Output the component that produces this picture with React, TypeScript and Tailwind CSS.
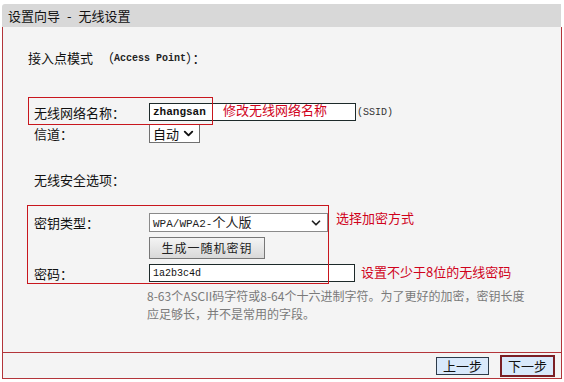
import { ChevronDown } from 'lucide-react';

const cjk = 'font-["Noto_Sans_CJK_SC","Noto_Sans",sans-serif]';
const mono = 'font-["Liberation_Mono","DejaVu_Sans_Mono","Noto_Sans_CJK_SC",monospace]';

function Label({ children }: { children: React.ReactNode }) {
  return <div className="w-[115px] shrink-0 text-[13px] leading-none text-[#111]">{children}</div>;
}

export default function App() {
  return (
    <div className={`h-[382px] w-[564px] bg-white px-[2px] pt-[4px] ${cjk}`}>
      <div className="flex h-[23px] w-[559px] items-center rounded-tl-[3px] bg-[#d8d8d8] pl-[6px] text-[13px] text-[#111]">
        设置向导<span className="mx-[7px]">-</span>无线设置
      </div>

      <div className="relative flex h-[352px] w-[560px] flex-col border-x border-b border-[#b3353a] bg-[#f4f4f4]">
        <div className="flex-1 pl-[31px]">
          <div className="-ml-[6px] mt-[23px] flex h-[16px] items-center text-[13px] text-[#111]">
            接入点模式
            <span className="ml-[8px]">（</span>
            <span className={`text-[10px] font-semibold text-[#222] ${mono}`}>Access Point</span>
            <span>）：</span>
          </div>

          <div className="mt-[37px] flex h-[18px] items-center">
            <Label>无线网络名称：</Label>
            <div className="flex h-[18px] w-[207px] items-center border border-[#1d2a2a] bg-white pl-[3px]">
              <span className={`text-[11px] font-bold text-[#111] ${mono}`}>zhangsan</span>
            </div>
            <span className={`ml-[1px] text-[10px] text-[#333] ${mono}`}>(SSID)</span>
          </div>

          <div className="mt-[3px] flex h-[19px] items-center">
            <Label>信道：</Label>
            <div className="flex h-[19px] w-[51px] items-center justify-between border border-[#707070] bg-white px-[3px] text-[13px] text-[#111]">
              自动
              <ChevronDown className="h-[15px] w-[15px]" strokeWidth={3} />
            </div>
          </div>

          <div className="mt-[29px] flex h-[16px] items-center text-[13px] text-[#111]">无线安全选项：</div>

          <div className="mt-[25px] flex h-[19px] items-center">
            <Label>密钥类型：</Label>
            <div className="flex h-[19px] w-[179px] items-center justify-between border border-[#8a8a8a] bg-white pl-[3px] pr-[4px]">
              <span className="text-[13px] text-[#222]">
                <span className={`text-[11px] ${mono}`}>WPA/WPA2-</span>个人版
              </span>
              <ChevronDown className="h-[14px] w-[14px] text-[#222]" strokeWidth={3} />
            </div>
          </div>

          <div className="mt-[5px] flex">
            <div className="w-[115px] shrink-0" />
            <button className="flex h-[22px] w-[116px] items-center justify-center border border-[#777] bg-gradient-to-b from-[#f4f4f4] to-[#d9d9d9] text-[12px] tracking-[1px] text-[#222]">
              生成一随机密钥
            </button>
          </div>

          <div className="mt-[5px] flex h-[18px] items-center">
            <Label>密码：</Label>
            <div className="flex h-[18px] w-[206px] items-center border border-[#1d2a2a] bg-white pl-[3px]">
              <span className={`text-[10px] text-[#111] ${mono}`}>1a2b3c4d</span>
            </div>
          </div>

          <div className="ml-[113px] mt-[5px] text-[12px] leading-[18px] text-[#7a7a7a]">
            8-63个ASCII码字符或8-64个十六进制字符。为了更好的加密，密钥长度
            <br />
            应足够长，并不是常用的字段。
          </div>
        </div>

        <div className="flex h-[26px] items-center justify-end gap-[11px] border-t border-[#b3353a] pr-[6px]">
          <button className="flex h-[18px] w-[53px] items-center justify-center border border-[#2c3b4a] bg-[#d9e9fb] text-[13px] text-[#111]">
            上一步
          </button>
          <button className="flex h-[22px] w-[55px] items-center justify-center border-2 border-[#7a1f25] bg-[#d9e9fb] text-[13px] text-[#111]">
            下一步
          </button>
        </div>

        {/* annotations */}
        <div className="pointer-events-none absolute left-[25px] top-[70px] h-[28px] w-[185px] border border-[#c8161d]" />
        <div className="absolute left-[220px] top-[75px] text-[13px] leading-[16px] text-[#d0021b]">修改无线网络名称</div>
        <div className="pointer-events-none absolute left-[24px] top-[178px] h-[79px] w-[302px] border border-[#c8161d]" />
        <div className="absolute left-[333px] top-[183px] text-[13px] leading-[16px] text-[#d0021b]">选择加密方式</div>
        <div className="absolute left-[358px] top-[237px] text-[13px] leading-[16px] text-[#d0021b]">设置不少于8位的无线密码</div>
      </div>
    </div>
  );
}
